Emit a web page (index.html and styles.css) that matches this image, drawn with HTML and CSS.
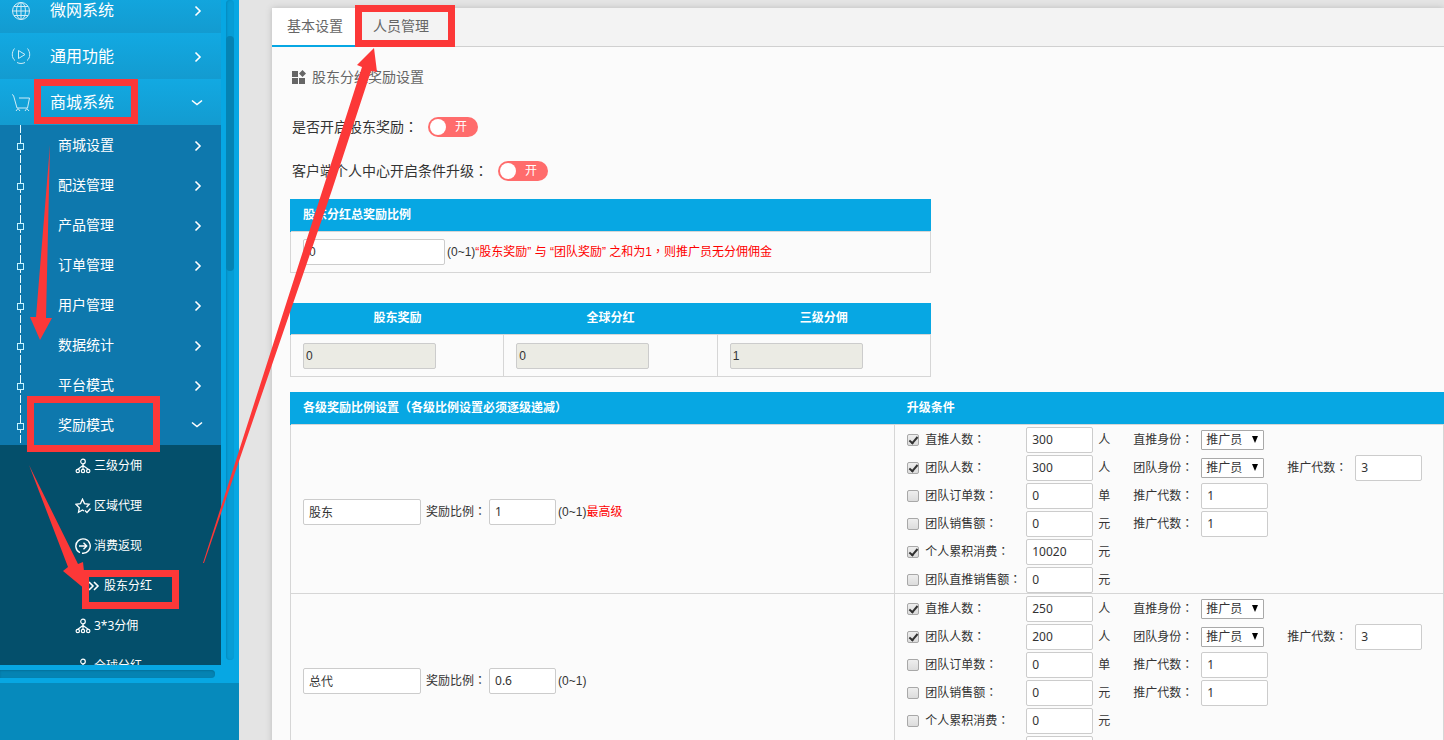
FILE: index.html
```html
<!DOCTYPE html>
<html lang="zh-CN">
<head>
<meta charset="utf-8">
<title>股东分红奖励设置</title>
<link rel="stylesheet" href="styles.css">
</head>
<body>
<svg class="defs" aria-hidden="true">
  <symbol id="right" viewBox="0 0 8 12"><path d="M1.500 1.500L6 6L1.500 10.500" fill="none" stroke="currentColor" stroke-width="1.600"/></symbol>
  <symbol id="down" viewBox="0 0 12 8"><path d="M1 1.500L6 5.500L11 1.500" fill="none" stroke="currentColor" stroke-width="1.600"/></symbol>
  <symbol id="tree" viewBox="0 0 16 16"><g fill="none" stroke="currentColor" stroke-width="1.200"><circle cx="8" cy="3.500" r="2.300"/><circle cx="2.800" cy="13" r="1.700"/><circle cx="8" cy="13" r="1.700"/><circle cx="13.200" cy="13" r="1.700"/><path d="M8 5.800V11.300M8 7.500L2.800 11.300M8 7.500L13.200 11.300"/></g></symbol>
</svg>
<aside class="sidebar">
  <div class="nav-area">
    <nav class="menu">
      <ul class="level-one">
        <li class="scrolled"><button class="item"><svg class="item-icon" viewBox="0 0 20 20"><g fill="none" stroke="currentColor"><circle cx="10" cy="10" r="8.500"/><ellipse cx="10" cy="10" rx="4.500" ry="8.500"/><path d="M10 1.500V18.500M1.500 10H18.500M3 5.500H17M3 14.500H17"/></g></svg><span class="item-text">微网系统</span><svg class="right"><use href="#right"/></svg></button></li>
        <li><button class="item"><svg class="item-icon" viewBox="0 0 20 20"><g fill="none" stroke="currentColor"><path d="M3.500 1.500C.5 5 .5 11 4 13.500M16.500 1.500C19.500 5 19.500 11 16 13.500M6 15.500C8.500 16.800 11.500 16.800 14 15.500M7.500 3.500L14 7.500L7.500 11.500Z"/></g></svg><span class="item-text">通用功能</span><svg class="right"><use href="#right"/></svg></button></li>
        <li><button class="item" aria-expanded="true"><svg class="item-icon" viewBox="0 0 20 20"><g fill="none" stroke="currentColor"><path d="M1 1.500L2.500 2.500L6 15H16.500L18.500 5H8M5 18L7 15.500L9 18M14 18L15.800 15.500L18 18"/></g></svg><span class="item-text">商城系统</span><svg class="down"><use href="#down"/></svg></button>
          <ul class="level-two">
            <li><button class="sub">商城设置<svg class="right"><use href="#right"/></svg></button></li>
            <li><button class="sub">配送管理<svg class="right"><use href="#right"/></svg></button></li>
            <li><button class="sub">产品管理<svg class="right"><use href="#right"/></svg></button></li>
            <li><button class="sub">订单管理<svg class="right"><use href="#right"/></svg></button></li>
            <li><button class="sub">用户管理<svg class="right"><use href="#right"/></svg></button></li>
            <li><button class="sub">数据统计<svg class="right"><use href="#right"/></svg></button></li>
            <li><button class="sub">平台模式<svg class="right"><use href="#right"/></svg></button></li>
            <li><button class="sub" aria-expanded="true">奖励模式<svg class="down"><use href="#down"/></svg></button>
              <ul class="level-three">
                <li><a class="leaf" href="#"><svg class="leaf-icon"><use href="#tree"/></svg>三级分佣</a></li>
                <li><a class="leaf" href="#"><svg class="leaf-icon" viewBox="0 0 16 16"><g fill="none" stroke="currentColor" stroke-width="1.300"><path d="M9 13L7.500 12L3.500 14.300L4.300 9.800L1 6.300L5.500 5.600L7.500 1.200L9.500 5.600L14.200 6.300L11.500 9.200M10 12.500L12 14.500L15.500 10.500"/></g></svg>区域代理</a></li>
                <li><a class="leaf" href="#"><svg class="leaf-icon" viewBox="0 0 16 16"><g fill="none" stroke="currentColor" stroke-width="1.400"><path d="M5 14.600A7.200 7.200 0 1 1 7 15.200M4 8H11.500M8.500 4.800L11.700 8L8.500 11.200M9 15.100A7.200 7.200 0 0 0 13 13.200"/></g></svg>消费返现</a></li>
                <li><a class="leaf current" href="#"><svg class="leaf-icon" viewBox="0 0 16 16"><path d="M4 4L8 8L4 12M9 4L13 8L9 12" fill="none" stroke="currentColor" stroke-width="1.600"/></svg>股东分红</a></li>
                <li><a class="leaf" href="#"><svg class="leaf-icon"><use href="#tree"/></svg>3*3分佣</a></li>
                <li><a class="leaf" href="#"><svg class="leaf-icon"><use href="#tree"/></svg>全球分红</a></li>
              </ul>
            </li>
          </ul>
        </li>
      </ul>
    </nav>
    <div class="track"><div class="thumb"></div></div>
  </div>
  <div class="bottom-track"><div class="bottom-thumb"></div></div>
  <div class="sidebar-foot"></div>
</aside>

<main class="main">
  <section class="panel">
    <div class="tabs" role="tablist">
      <button class="tab active" role="tab" aria-selected="true">基本设置</button>
      <button class="tab" role="tab" aria-selected="false">人员管理</button>
    </div>
    <form class="content">
      <h1 class="title"><svg class="title-icon" viewBox="0 0 14 14"><path d="M0 1H6V7H0ZM0 8H6V14H0ZM7 8H13V14H7ZM10.500 0L14 3.500L10.500 7L7 3.500Z" fill="#666"/></svg>股东分红奖励设置</h1>
      <div class="setting"><span class="setting-name" id="s1">是否开启股东奖励<span class="mark">：</span></span><label class="switch"><input type="checkbox" checked aria-labelledby="s1"><span>开</span></label></div>
      <div class="setting"><span class="setting-name" id="s2">客户端个人中心开启条件升级<span class="mark">：</span></span><label class="switch"><input type="checkbox" checked aria-labelledby="s2"><span>开</span></label></div>

      <table class="grid total">
        <thead><tr><th>股东分红总奖励比例</th></tr></thead>
        <tbody><tr><td><div class="line"><input class="box wide" type="text" value="0" id="total"><label for="total">(0~1)<span class="red">“股东奖励” 与 “团队奖励” 之和为1<span class="mark">，</span>则推广员无分佣佣金</span></label></div></td></tr></tbody>
      </table>

      <table class="grid shares">
        <thead><tr><th>股东奖励</th><th>全球分红</th><th>三级分佣</th></tr></thead>
        <tbody><tr>
          <td><input class="box fixed" type="text" value="0" readonly aria-label="股东奖励"></td>
          <td><input class="box fixed" type="text" value="0" readonly aria-label="全球分红"></td>
          <td><input class="box fixed" type="text" value="1" readonly aria-label="三级分佣"></td>
        </tr></tbody>
      </table>

      <table class="grid levels">
        <thead><tr><th>各级奖励比例设置<span class="mark">（</span>各级比例设置必须逐级递减<span class="mark">）</span></th><th>升级条件</th></tr></thead>
        <tbody>
          <tr>
            <td class="level"><div class="line"><input class="box name" type="text" value="股东" aria-label="级别名称"><label class="ratio" for="r1">奖励比例<span class="mark">：</span></label><input class="box short" type="text" value="1" id="r1"><span>(0~1)<span class="red">最高级</span></span></div></td>
            <td class="rules">
              <div class="rule"><input type="checkbox" class="tick" id="a1" checked><label for="a1">直推人数<span class="mark">：</span></label><input class="box short" type="text" value="300" aria-label="直推人数"><span>人</span><label for="a1s">直推身份<span class="mark">：</span></label><span class="pick"><select id="a1s"><option>推广员</option></select></span></div>
              <div class="rule"><input type="checkbox" class="tick" id="a2" checked><label for="a2">团队人数<span class="mark">：</span></label><input class="box short" type="text" value="300" aria-label="团队人数"><span>人</span><label for="a2s">团队身份<span class="mark">：</span></label><span class="pick"><select id="a2s"><option>推广员</option></select></span><label for="a2g">推广代数<span class="mark">：</span></label><input class="box short" type="text" value="3" id="a2g"></div>
              <div class="rule"><input type="checkbox" class="tick" id="a3"><label for="a3">团队订单数<span class="mark">：</span></label><input class="box short" type="text" value="0" aria-label="团队订单数"><span>单</span><label for="a3g">推广代数<span class="mark">：</span></label><input class="box short" type="text" value="1" id="a3g"></div>
              <div class="rule"><input type="checkbox" class="tick" id="a4"><label for="a4">团队销售额<span class="mark">：</span></label><input class="box short" type="text" value="0" aria-label="团队销售额"><span>元</span><label for="a4g">推广代数<span class="mark">：</span></label><input class="box short" type="text" value="1" id="a4g"></div>
              <div class="rule"><input type="checkbox" class="tick" id="a5" checked><label for="a5">个人累积消费<span class="mark">：</span></label><input class="box short" type="text" value="10020" aria-label="个人累积消费"><span>元</span></div>
              <div class="rule"><input type="checkbox" class="tick" id="a6"><label for="a6">团队直推销售额<span class="mark">：</span></label><input class="box short" type="text" value="0" aria-label="团队直推销售额"><span>元</span></div>
            </td>
          </tr>
          <tr>
            <td class="level"><div class="line"><input class="box name" type="text" value="总代" aria-label="级别名称"><label class="ratio" for="r2">奖励比例<span class="mark">：</span></label><input class="box short" type="text" value="0.6" id="r2"><span>(0~1)</span></div></td>
            <td class="rules">
              <div class="rule"><input type="checkbox" class="tick" id="b1" checked><label for="b1">直推人数<span class="mark">：</span></label><input class="box short" type="text" value="250" aria-label="直推人数"><span>人</span><label for="b1s">直推身份<span class="mark">：</span></label><span class="pick"><select id="b1s"><option>推广员</option></select></span></div>
              <div class="rule"><input type="checkbox" class="tick" id="b2" checked><label for="b2">团队人数<span class="mark">：</span></label><input class="box short" type="text" value="200" aria-label="团队人数"><span>人</span><label for="b2s">团队身份<span class="mark">：</span></label><span class="pick"><select id="b2s"><option>推广员</option></select></span><label for="b2g">推广代数<span class="mark">：</span></label><input class="box short" type="text" value="3" id="b2g"></div>
              <div class="rule"><input type="checkbox" class="tick" id="b3"><label for="b3">团队订单数<span class="mark">：</span></label><input class="box short" type="text" value="0" aria-label="团队订单数"><span>单</span><label for="b3g">推广代数<span class="mark">：</span></label><input class="box short" type="text" value="1" id="b3g"></div>
              <div class="rule"><input type="checkbox" class="tick" id="b4"><label for="b4">团队销售额<span class="mark">：</span></label><input class="box short" type="text" value="0" aria-label="团队销售额"><span>元</span><label for="b4g">推广代数<span class="mark">：</span></label><input class="box short" type="text" value="1" id="b4g"></div>
              <div class="rule"><input type="checkbox" class="tick" id="b5"><label for="b5">个人累积消费<span class="mark">：</span></label><input class="box short" type="text" value="0" aria-label="个人累积消费"><span>元</span></div>
              <div class="rule"><input type="checkbox" class="tick" id="b6"><label for="b6">团队直推销售额<span class="mark">：</span></label><input class="box short" type="text" value="0" aria-label="团队直推销售额"><span>元</span></div>
            </td>
          </tr>
        </tbody>
      </table>
    </form>
  </section>
</main>

<svg class="notes" width="1444" height="740" viewBox="0 0 1444 740" aria-hidden="true">
  <g fill="none" stroke="#fc3838" stroke-width="7">
    <rect x="37.500" y="82.500" width="97" height="38"/>
    <rect x="30.500" y="399.500" width="126" height="49"/>
    <rect x="85.500" y="573.500" width="90" height="32"/>
    <rect x="358.500" y="8.500" width="93" height="35"/>
  </g>
  <g fill="#fc3838">
    <path d="M50 145L46 318H52L40 340L30 317H36Z"/>
    <path d="M29 465L78 564L83 562L86 590L63 571L68 567Z"/>
    <path d="M203 563L362 67L357 65L374 48L377 72L371 71L332 190L204 563Z"/>
  </g>
</svg>
</body>
</html>
```
FILE: styles.css
```css
*, *::before { box-sizing: border-box; }

body {
  margin: 0;
  display: flex;
  height: 100vh;
  overflow: hidden;
  position: relative;
  background: #e4e4e4;
  color: #333;
  font: 12px/20px "Liberation Sans", "Noto Sans CJK SC", sans-serif;
}

button, input, select { font: inherit; color: inherit; margin: 0; }
ul { list-style: none; margin: 0; padding: 0; }
.defs { display: none; }
.mark { font-family: "Noto Sans CJK TC", sans-serif; font-feature-settings: "locl" 0; }
.red { color: #f00; }

/* Sidebar */
.sidebar {
  flex: none;
  width: 239px;
  display: flex;
  flex-direction: column;
  background: #07a7e3;
  color: #fff;
}
.nav-area { flex: 1; min-height: 0; display: flex; gap: 5px; }
.menu { width: 221px; overflow: hidden; }
.scrolled { margin-top: -13px; }
.item, .sub {
  display: flex;
  align-items: center;
  width: 100%;
  border: 0;
  text-align: left;
  background: none;
}
.item {
  height: 46px;
  padding: 2px 18px 0 11px;
  font-size: 16px;
  background: linear-gradient(#12a9e2, #139bd0);
}
.item-icon { width: 20px; height: 20px; margin-right: 19px; opacity: .8; }
.item .right, .item .down, .sub .right, .sub .down { margin-left: auto; }
.right { width: 8px; height: 12px; margin-right: 1px; }
.down { width: 12px; height: 8px; }
.level-two { background: #0e78ad; }
.level-two > li { position: relative; }
.sub { height: 40px; padding: 0 18px 0 58px; font-size: 14px; }
.sub .right { margin-top: 2px; }
.level-two > li::before {
  content: "";
  position: absolute;
  left: 20px;
  top: 0;
  width: 1px;
  height: 40px;
  background: repeating-linear-gradient(#e6faff 0 8px, transparent 8px 10px);
}
.level-two > li::after {
  content: "";
  position: absolute;
  left: 17px;
  top: 18px;
  width: 5px;
  height: 5px;
  border: 1px solid #c4f4ff;
  background: #0e78ad;
}
.level-three { background: #044f6b; }
.leaf {
  display: flex;
  align-items: center;
  gap: 3px;
  height: 40px;
  padding: 2px 0 0 75px;
  color: #fff;
  text-decoration: none;
  font-family: "Noto Sans", "Noto Sans CJK SC", sans-serif;
}
.leaf.current { padding-left: 85px; }
.leaf-icon { width: 16px; height: 16px; }
.track {
  width: 8px;
  margin-bottom: 5px;
  padding-top: 36px;
  border-radius: 4px;
  background: #079dd5;
  box-shadow: inset 1px 0 2px #068abd;
}
.thumb { height: 235px; border-radius: 4px; background: #0583b3; }
.bottom-track { height: 18px; padding-top: 5px; }
.bottom-thumb { width: 215px; height: 8px; border-radius: 0 4px 4px 0; background: #0583b3; box-shadow: inset 0 1px 2px #04719b; }
.sidebar-foot { height: 57px; background: #068abc; }

/* Settings panel */
.main { flex: 1; min-width: 0; padding: 8px 0 0 33px; }
.panel { background: #fbfbfb; box-shadow: 0 0 6px #bbb; min-height: 100%; }
.tabs { display: flex; height: 39px; background: #f3f3f3; border-bottom: 1px solid #d0d0d0; }
.tab {
  height: 39px;
  padding: 0 15px 2px;
  border: 0;
  border-bottom: 2px solid transparent;
  background: none;
  color: #666;
  font-size: 14px;
}
.tab.active { background: #fff; border-color: #07a7e3; }
.content { padding: 20px 0 0 18px; }
.title {
  display: flex;
  align-items: center;
  gap: 6px;
  margin: 0 0 24px;
  padding-left: 2px;
  font-size: 14px;
  font-weight: 400;
  color: #666;
}
.title-icon { width: 14px; height: 14px; }
.setting { display: flex; align-items: center; gap: 10px; height: 32px; margin-bottom: 12px; padding-left: 2px; font-size: 14px; }
.setting-name { padding-bottom: 2px; }
.switch {
  display: flex;
  align-items: center;
  gap: 9px;
  width: 50px;
  height: 20px;
  padding: 0 2px;
  border-radius: 10px;
  background: #ff6c6c;
  color: #fff;
  font-size: 12px;
}
.switch input { appearance: none; width: 16px; height: 16px; border-radius: 8px; background: #fff; }

.grid { border-collapse: collapse; table-layout: fixed; }
.grid th { height: 32px; padding: 0 12px; background: #07a7e3; color: #fff; text-align: left; }
.grid th:first-child { border-left: 1px solid #07a7e3; }
.grid td { height: 41px; padding: 0 12px; border: 1px solid #d6d6d6; }
.total { width: 641px; margin-bottom: 30px; }
.shares { width: 641px; margin-bottom: 15px; }
.grid.shares th { text-align: center; }
.grid.shares td { height: 42px; }
.levels { width: 100%; }
.levels th:first-child { width: 52.4%; }
.line { display: flex; align-items: center; gap: 2px; }
.box {
  height: 26px;
  padding: 0 5px;
  border: 1px solid #ccc;
  border-radius: 2px;
  background: #fff;
}
.wide { width: 142px; }
.name { width: 118px; }
.short { width: 67px; font-family: "Noto Sans", "Noto Sans CJK SC", sans-serif; }
.fixed { display: block; width: 133px; padding: 0 2px; background: #ebebe4; }
.ratio { margin: 0 1px 0 3px; }

.grid .level { padding-top: 6px; }
.grid .rules { padding-right: 0; }
.rule {
  display: grid;
  grid-template-columns: 18px 101px 72px 35px 68px 86px 68px 67px;
  align-items: center;
  height: 28px;
  padding-top: 2px;
}
.tick {
  appearance: none;
  width: 12px;
  height: 12px;
  border: 1px solid #a8a8a8;
  border-radius: 2px;
  background: linear-gradient(#eee, #dcdcdc);
}
.tick:checked::before {
  content: "";
  display: block;
  width: 5px;
  height: 9px;
  margin: 0 0 0 3px;
  border: solid #333;
  border-width: 0 2px 2px 0;
  transform: rotate(40deg);
}
.pick { position: relative; width: 63px; height: 20px; }
.pick select {
  appearance: none;
  display: block;
  width: 63px;
  height: 20px;
  padding: 0 4px;
  border: 1px solid #a9a9a9;
  border-radius: 1px;
  background: #fff;
  line-height: 18px;
}
.pick::after {
  content: "";
  position: absolute;
  right: 6px;
  top: 6px;
  border: solid transparent;
  border-width: 7px 3px 0;
  border-top-color: #000;
}

/* Hand-drawn guidance over the page */
.notes { position: absolute; left: 0; top: 0; pointer-events: none; }
```
